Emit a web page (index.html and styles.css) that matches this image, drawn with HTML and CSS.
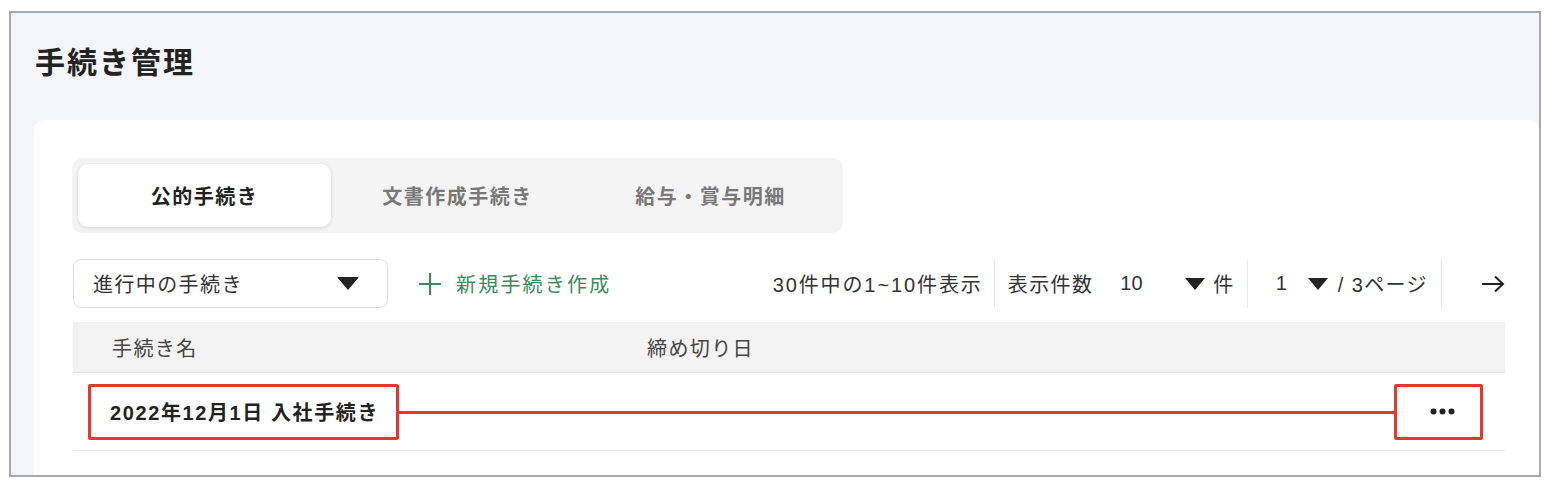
FILE: index.html
```html
<!DOCTYPE html>
<html lang="ja">
<head>
    <meta charset="UTF-8">
    <title>手続き管理</title>
    <link rel="stylesheet" href="styles.css">
</head>
<body>

<div class="frame">
    <h1 class="page-title">手続き管理</h1>

    <div class="card">
        <div class="tabs">
            <div class="tab active">公的手続き</div>
            <div class="tab">文書作成手続き</div>
            <div class="tab">給与・賞与明細</div>
        </div>

        <div class="toolbar">
            <div class="status-select">
                <span>進行中の手続き</span>
                <svg width="22" height="13" viewBox="0 0 22 13"><polygon points="0,0 22,0 11,13" fill="#222"/></svg>
            </div>

            <div class="new-btn">
                <svg width="24" height="24" viewBox="0 0 24 24"><path d="M12 1v22M1 12h22" stroke="#3d8b5a" stroke-width="2.2" fill="none"/></svg>
                <span>新規手続き作成</span>
            </div>

            <div class="pager">
                <span class="count">30件中の1~10件表示</span>
                <span class="sep"></span>
                <span class="per-label">表示件数</span>
                <span class="mini-select per">
                    <span>10</span>
                    <svg width="20" height="12" viewBox="0 0 20 12"><polygon points="0,0 20,0 10,12" fill="#222"/></svg>
                </span>
                <span class="unit">件</span>
                <span class="sep"></span>
                <span class="mini-select page">
                    <span>1</span>
                    <svg width="20" height="12" viewBox="0 0 20 12"><polygon points="0,0 20,0 10,12" fill="#222"/></svg>
                </span>
                <span class="total">/ 3ページ</span>
                <span class="sep"></span>
                <span class="next">
                    <svg width="24" height="18" viewBox="0 0 24 18"><path d="M1 9h21M14 1.5L22 9l-8 7.5" stroke="#222" stroke-width="2" fill="none"/></svg>
                </span>
            </div>
        </div>

        <div class="list">
            <div class="list-head">
                <div class="col-name">手続き名</div>
                <div class="col-date">締め切り日</div>
                <div></div>
            </div>
            <div class="list-row">
                <div class="col-name name">2022年12月1日 入社手続き</div>
                <div class="col-date dash">-</div>
                <div class="col-menu">
                    <svg width="25" height="7" viewBox="0 0 25 7"><circle cx="3.5" cy="3.5" r="3" fill="#222"/><circle cx="12.5" cy="3.5" r="3" fill="#222"/><circle cx="21.5" cy="3.5" r="3" fill="#222"/></svg>
                </div>

                <div class="callout">
                    <div class="callout-box first"></div>
                    <div class="callout-line"></div>
                    <div class="callout-box last"></div>
                </div>
            </div>
        </div>
    </div>
</div>

</body>
</html>
```

FILE: styles.css
```css
body{
    margin: 0;
    background: #fff;
    font-family: "Liberation Sans", "Noto Sans CJK JP", sans-serif;
    font-size: 20px;
    letter-spacing: 1.4px;
    color: #222;
}

.frame{
    margin: 11px 0 0 9px;
    width: 1532px;
    height: 466px;
    box-sizing: border-box;
    border: 2px solid #a9a9a9;
    background: #f4f5f9;
    display: flex;
    flex-direction: column;
    overflow: hidden;
}

.page-title{
    margin: 0;
    padding: 30px 24px 0;
    font-size: 30px;
    line-height: 40px;
    letter-spacing: 2px;
    font-weight: bold;
    color: #222;
}

.card{
    flex: 1;
    margin: 37px 0 0 23px;
    background: #fff;
    border-radius: 10px 10px 0 0;
    padding: 38px 34px 0 38px;
}

/* tabs */
.tabs{
    display: flex;
    width: 771px;
    box-sizing: border-box;
    padding: 6px;
    background: #f4f4f4;
    border-radius: 10px;
}
.tab{
    width: 253px;
    height: 63px;
    display: flex;
    align-items: center;
    justify-content: center;
    font-weight: bold;
    color: #787878;
    border-radius: 10px;
    letter-spacing: 1.5px;
}
.tab.active{
    background: #fff;
    color: #222;
    box-shadow: 0 1px 4px rgba(0,0,0,0.13);
}

/* toolbar */
.toolbar{
    display: flex;
    align-items: center;
    height: 49px;
    margin-top: 26px;
}
.status-select{
    width: 315px;
    height: 49px;
    box-sizing: border-box;
    margin-left: 1px;
    border: solid 1px #dedede;
    border-radius: 8px;
    display: flex;
    align-items: center;
    justify-content: space-between;
    padding: 0 28px 0 19px;
    color: #333;
}
.new-btn{
    display: flex;
    align-items: center;
    margin-left: 30px;
    color: #3d8b5a;
    letter-spacing: 2.2px;
}
.new-btn svg{
    margin-right: 14px;
}

.pager{
    margin-left: auto;
    display: flex;
    align-items: center;
    height: 49px;
    color: #333;
}
.sep{
    width: 1px;
    height: 49px;
    background: #e8e8e8;
}
.count{ margin-right: 11px; letter-spacing: 1.9px; }
.per-label{ margin-left: 13px; }
.mini-select{
    display: flex;
    align-items: center;
    justify-content: space-between;
    letter-spacing: 0;
}
.mini-select.per{ width: 85px; margin-left: 27px; }
.mini-select.page{ width: 52px; margin-left: 28px; }
.unit{ margin: 0 12px 0 8px; }
.total{ margin: 0 13px 0 10px; }
.next{
    display: flex;
    margin-left: 39px;
}

/* list */
.list{
    margin-top: 14px;
    margin-left: 1px;
}
.list-head,
.list-row{
    display: grid;
    grid-template-columns: 574px 1fr 120px;
    align-items: center;
}
.list-head{
    height: 50px;
    background: #f3f3f3;
    border-bottom: solid 1px #e6e6e6;
    color: #444;
}
.list-head .col-name{ padding-left: 39px; }

.list-row{
    position: relative;
    height: 77px;
    border-bottom: solid 1px #e8e8e8;
}
.list-row .name{
    padding-left: 37px;
    font-weight: bold;
    letter-spacing: 1.6px;
}
.dash{
    color: #aaa;
    padding-left: 3px;
}
.col-menu{
    display: flex;
    justify-content: flex-end;
    padding-right: 50px;
}

/* red annotation over the row */
.callout{
    position: absolute;
    left: 15px;
    top: 11px;
    width: 1395px;
    height: 56px;
    display: flex;
    align-items: center;
}
.callout-box{
    height: 56px;
    box-sizing: border-box;
    border: solid 3px #e5392c;
    border-radius: 2px;
}
.callout-box.first{ width: 311px; }
.callout-box.last{ width: 89px; }
.callout-line{
    flex: 1;
    height: 3px;
    background: #e5392c;
}
```
